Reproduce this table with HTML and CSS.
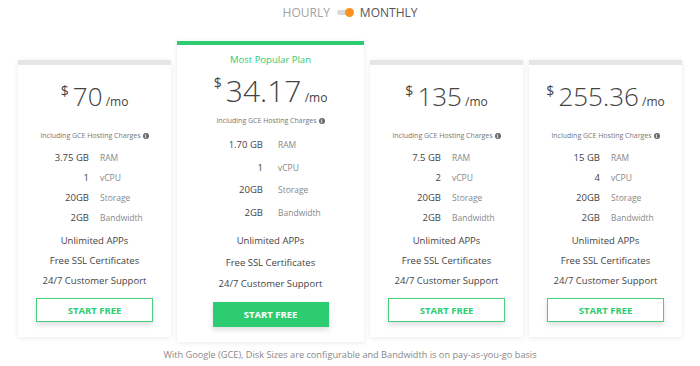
FILE: index.html
```html
<!DOCTYPE html>
<html lang="en">
<head>
<meta charset="utf-8">
<title>Pricing</title>
<link rel="stylesheet" href="styles.css">
</head>
<body>
<div class="page">
  <div class="switch">
    <span class="opt">HOURLY</span>
    <span class="toggle"><span class="knob"></span></span>
    <span class="opt active">MONTHLY</span>
  </div>

  <div class="plans">
    <div class="card">
      <div class="bar"></div>
      <div class="price"><span class="cur">$</span> <span class="amt">70</span> <span class="per">/mo</span></div>
      <div class="incl">Including GCE Hosting Charges <span class="info">i</span></div>
      <div class="specs">
        <span class="val">3.75 GB</span><span class="lbl">RAM</span>
        <span class="val">1</span><span class="lbl">vCPU</span>
        <span class="val">20GB</span><span class="lbl">Storage</span>
        <span class="val">2GB</span><span class="lbl">Bandwidth</span>
      </div>
      <ul class="feats">
        <li>Unlimited APPs</li>
        <li>Free SSL Certificates</li>
        <li>24/7 Customer Support</li>
      </ul>
      <a class="btn">START FREE</a>
    </div>

    <div class="card featured">
      <div class="bar"></div>
      <div class="popular">Most Popular Plan</div>
      <div class="price"><span class="cur">$</span> <span class="amt">34.17</span> <span class="per">/mo</span></div>
      <div class="incl">Including GCE Hosting Charges <span class="info">i</span></div>
      <div class="specs">
        <span class="val">1.70 GB</span><span class="lbl">RAM</span>
        <span class="val">1</span><span class="lbl">vCPU</span>
        <span class="val">20GB</span><span class="lbl">Storage</span>
        <span class="val">2GB</span><span class="lbl">Bandwidth</span>
      </div>
      <ul class="feats">
        <li>Unlimited APPs</li>
        <li>Free SSL Certificates</li>
        <li>24/7 Customer Support</li>
      </ul>
      <a class="btn">START FREE</a>
    </div>

    <div class="card">
      <div class="bar"></div>
      <div class="price"><span class="cur">$</span> <span class="amt">135</span> <span class="per">/mo</span></div>
      <div class="incl">Including GCE Hosting Charges <span class="info">i</span></div>
      <div class="specs">
        <span class="val">7.5 GB</span><span class="lbl">RAM</span>
        <span class="val">2</span><span class="lbl">vCPU</span>
        <span class="val">20GB</span><span class="lbl">Storage</span>
        <span class="val">2GB</span><span class="lbl">Bandwidth</span>
      </div>
      <ul class="feats">
        <li>Unlimited APPs</li>
        <li>Free SSL Certificates</li>
        <li>24/7 Customer Support</li>
      </ul>
      <a class="btn">START FREE</a>
    </div>

    <div class="card">
      <div class="bar"></div>
      <div class="price"><span class="cur">$</span> <span class="amt">255.36</span> <span class="per">/mo</span></div>
      <div class="incl">Including GCE Hosting Charges <span class="info">i</span></div>
      <div class="specs">
        <span class="val">15 GB</span><span class="lbl">RAM</span>
        <span class="val">4</span><span class="lbl">vCPU</span>
        <span class="val">20GB</span><span class="lbl">Storage</span>
        <span class="val">2GB</span><span class="lbl">Bandwidth</span>
      </div>
      <ul class="feats">
        <li>Unlimited APPs</li>
        <li>Free SSL Certificates</li>
        <li>24/7 Customer Support</li>
      </ul>
      <a class="btn">START FREE</a>
    </div>
  </div>

  <p class="note">With Google (GCE), Disk Sizes are configurable and Bandwidth is on pay-as-you-go basis</p>
</div>
</body>
</html>
```

FILE: styles.css
```css
* { box-sizing: border-box; }
html, body { margin: 0; padding: 0; background: #fff; }
body {
  font-family: "Open Sans", "Liberation Sans", sans-serif;
  color: #444;
  width: 700px;
  height: 366px;
  overflow: hidden;
}
.page { display: flex; flex-direction: column; align-items: center; }

.switch {
  display: flex;
  align-items: center;
  justify-content: center;
  gap: 7px;
  height: 24px;
  padding-top: 1px;
  font-size: 12px;
}
.opt { color: #a3a3a3; }
.opt.active { color: #555; }
.toggle {
  display: flex;
  align-items: center;
  justify-content: flex-end;
  width: 16px;
  height: 5px;
  border-radius: 3px;
  background: #d9d9d9;
}
.knob {
  width: 9px;
  height: 9px;
  border-radius: 50%;
  background: #f7931e;
  margin-right: -1px;
}

.plans {
  display: flex;
  align-items: flex-start;
  justify-content: center;
  gap: 6px;
  margin-top: 17px;
}
.card {
  width: 153px;
  margin-top: 19px;
  background: #fff;
  box-shadow: 0 1px 5px rgba(0, 0, 0, 0.09);
  display: flex;
  flex-direction: column;
  align-items: center;
  padding-bottom: 15px;
}
.bar { align-self: stretch; height: 5px; background: #e6e6e6; }

.price {
  margin-top: 14px;
  line-height: 24px;
  height: 24px;
  color: #444;
  white-space: nowrap;
}
.amt { font-size: 26px; font-weight: 300; }
.cur { font-size: 14px; vertical-align: 10px; font-weight: 400; }
.per { font-size: 12px; font-weight: 400; margin-left: -1px; }

.incl {
  margin-top: 27px;
  font-size: 7px;
  line-height: 12px;
  color: #777;
  display: flex;
  align-items: center;
  gap: 2px;
}
.info {
  display: inline-flex;
  align-items: center;
  justify-content: center;
  width: 6px;
  height: 6px;
  border-radius: 50%;
  background: #666;
  color: #fff;
  font-size: 5px;
  font-weight: 700;
  line-height: 1;
}

.specs {
  margin-top: 6px;
  align-self: stretch;
  display: grid;
  grid-template-columns: 1fr 1fr;
  column-gap: 11px;
  line-height: 20px;
}
.val { text-align: right; font-size: 9.5px; color: #444; }
.lbl { text-align: left; font-size: 8.5px; color: #888; }

.feats {
  list-style: none;
  margin: 3px 0 0;
  padding: 0;
  text-align: center;
  font-size: 9.5px;
  line-height: 20px;
  color: #444;
}

.btn {
  margin-top: 7px;
  width: 117px;
  height: 24px;
  border: 1.5px solid #48d07f;
  color: #2ecc71;
  font-size: 9.5px;
  font-weight: 700;
  display: flex;
  align-items: center;
  justify-content: center;
  box-shadow: 0 3px 5px rgba(0, 0, 0, 0.13);
  background: #fff;
}

.featured {
  width: 187px;
  margin-top: 0;
}
.featured .bar { height: 4px; background: #2ecc71; }
.popular {
  margin-top: 7px;
  font-size: 9.5px;
  line-height: 16px;
  color: #2ecc71;
}
.featured .price { margin-top: 2px; line-height: 26px; height: 26px; }
.featured .amt { font-size: 30px; }
.featured .cur { vertical-align: 14px; }
.featured .incl { margin-top: 19px; }
.featured .specs { margin-top: 7px; line-height: 22.5px; column-gap: 15px; }
.featured .feats { margin-top: 6px; line-height: 21.5px; }
.featured .btn {
  margin-top: 7px;
  width: 116px;
  height: 25px;
  background: #2ecc71;
  border-color: #2ecc71;
  color: #fff;
}

.note {
  margin: 6px 0 0;
  font-size: 9.2px;
  color: #888;
  line-height: 14px;
}
```
